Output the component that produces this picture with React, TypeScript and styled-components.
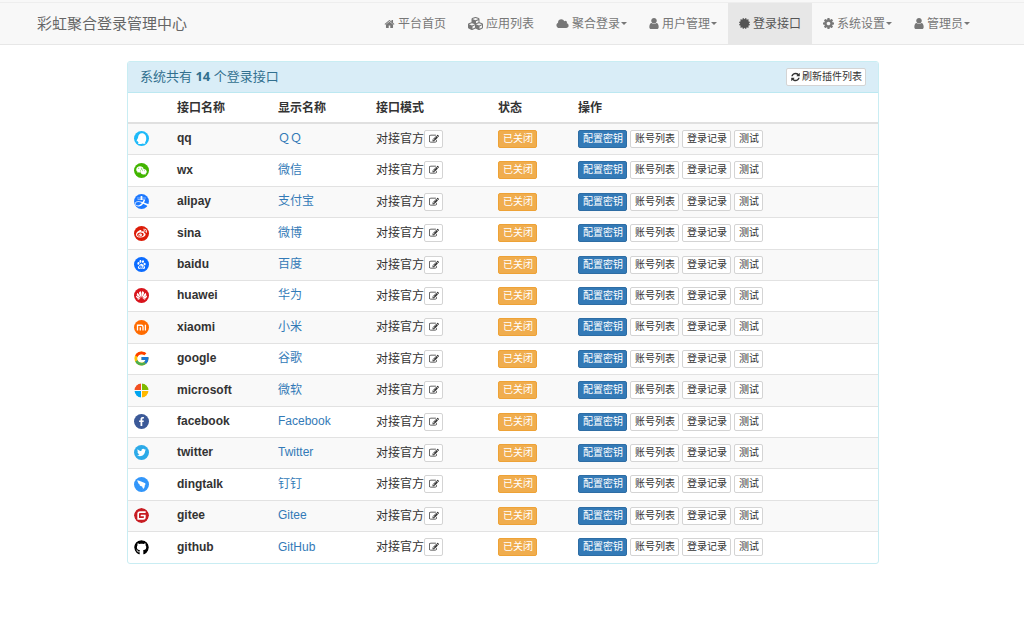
import React from "react";
import styled, { createGlobalStyle, css } from "styled-components";
import {
  FaAlipay,
  FaCertificate,
  FaCubes,
  FaFacebookF,
  FaGithub,
  FaTwitter,
  FaWeibo,
  FaWeixin,
} from "react-icons/fa";
import { FcGoogle } from "react-icons/fc";
import { SiBaidu, SiGitee, SiHuawei } from "react-icons/si";

const GlobalStyle = createGlobalStyle`
  *, *::before, *::after { box-sizing: border-box; }
  body {
    margin: 0;
    background: #fff;
    color: #333;
    font-family: "Liberation Sans", "Noto Sans CJK SC", sans-serif;
    font-size: 12px;
    line-height: 16px;
  }
  button { font-family: inherit; cursor: pointer; }
  a { text-decoration: none; }
`;

const glyphs = {
  home: "M1472 992v480q0 26-19 45t-45 19h-384v-384h-256v384h-384q-26 0-45-19t-19-45v-480q0-1 .5-3t.5-3l575-474 575 474q1 2 1 6zm223-69l-62 74q-8 9-21 11h-3q-13 0-21-7l-692-577-692 577q-12 8-24 7-13-2-21-11l-62-74q-8-10-7-23.5t11-21.5l719-599q32-26 76-26t76 26l244 204v-195q0-14 9-23t23-9h192q14 0 23 9t9 23v408l219 182q10 8 11 21.5t-7 23.5z",
  cloud: "M1984 1152q0 159-112.5 271.5t-271.5 112.5h-1088q-185 0-316.5-131.5t-131.5-316.5q0-132 71-241.5t187-163.5q-2-28-2-43 0-212 150-362t362-150q158 0 286.5 88t187.5 230q70-62 166-62 106 0 181 75t75 181q0 75-41 138 129 30 213 134.5t84 239.5z",
  user: "M1536 1399q0 109-62.5 187t-150.5 78h-854q-88 0-150.5-78t-62.5-187q0-85 8.5-160.5t31.5-152 58.5-131 94-89 134.5-34.5q131 128 313 128t313-128q76 0 134.5 34.5t94 89 58.5 131 31.5 152 8.5 160.5zm-256-887q0 159-112.5 271.5t-271.5 112.5-271.5-112.5-112.5-271.5 112.5-271.5 271.5-112.5 271.5 112.5 112.5 271.5z",
  cog: "M1152 896q0-106-75-181t-181-75-181 75-75 181 75 181 181 75 181-75 75-181zm512-109v222q0 12-8 23t-20 13l-185 28q-19 54-39 91 35 50 107 138 10 12 10 25t-9 23q-27 37-99 108t-94 71q-12 0-26-9l-138-108q-44 23-91 38-16 136-29 186-7 28-36 28h-222q-14 0-24.5-8.5t-11.5-21.5l-28-184q-49-16-90-37l-141 107q-10 9-25 9-14 0-25-11-126-114-165-168-7-10-7-23 0-12 8-23 15-21 51-66.5t54-70.5q-27-50-41-99l-183-27q-13-2-21-12.5t-8-23.5v-222q0-12 8-23t19-13l186-28q14-46 39-92-40-57-107-138-10-12-10-24 0-10 9-23 26-36 98.5-107.5t94.5-71.5q13 0 26 10l138 107q44-23 91-38 16-136 29-186 7-28 36-28h222q14 0 24.5 8.5t11.5 21.5l28 184q49 16 90 37l142-107q9-9 24-9 13 0 25 10 129 119 165 170 7 8 7 22 0 12-8 23-15 21-51 66.5t-54 70.5q26 50 41 98l183 28q13 2 21 12.5t8 23.5z",
  refresh: "M1639 1056q0 5-1 7-64 268-268 434.5t-478 166.5q-146 0-282.5-55t-243.5-157l-129 129q-19 19-45 19t-45-19-19-45v-448q0-26 19-45t45-19h448q26 0 45 19t19 45-19 45l-137 137q71 66 161 102t187 36q134 0 250-65t186-179q11-17 53-117 8-23 30-23h192q13 0 22.5 9.5t9.5 22.5zm25-800v448q0 26-19 45t-45 19h-448q-26 0-45-19t-19-45 19-45l138-138q-148-137-349-137-134 0-250 65t-186 179q-11 17-53 117-8 23-30 23h-199q-13 0-22.5-9.5t-9.5-22.5v-7q65-268 270-434.5t480-166.5q146 0 284 55.5t245 156.5l130-129q19-19 45-19t45 19 19 45z",
  edit: "M888 1184l116-116-152-152-116 116v56h96v96h56zm440-720q-16-16-33 1l-350 350q-17 17-1 33t33-1l350-350q17-17 1-33zm80 594v190q0 119-84.5 203.5t-203.5 84.5h-832q-119 0-203.5-84.5t-84.5-203.5v-832q0-119 84.5-203.5t203.5-84.5h832q63 0 117 25 15 7 18 23 3 17-9 29l-49 49q-14 14-32 8-23-6-45-6h-832q-66 0-113 47t-47 113v832q0 66 47 113t113 47h832q66 0 113-47t47-113v-126q0-13 9-22l64-64q15-15 35-7t20 29zm-96-738l288 288-672 672h-288v-288zm444 132l-92 92-288-288 92-92q28-28 68-28t68 28l152 152q28 28 28 68t-28 68z",
};

function Glyph({ name, box = "0 0 1792 1792", w = 12, h = 12 }: { name: keyof typeof glyphs; box?: string; w?: number; h?: number }) {
  return (
    <svg viewBox={box} width={w} height={h} fill="currentColor" aria-hidden="true">
      <path d={glyphs[name]} />
    </svg>
  );
}

/* ---------- navigation bar ---------- */

const TopBar = styled.header`
  padding: 2px 0 0;
  background: #f8f8f8;
`;

const NavFrame = styled.nav`
  padding-right: 18px;
  border-top: 1px solid #eee;
  border-bottom: 1px solid #e7e7e7;
`;

const NavInner = styled.div`
  display: flex;
  justify-content: space-between;
  max-width: 956px;
  min-height: 41px;
  margin: 0 auto;
`;

const Brand = styled.a`
  display: flex;
  align-items: center;
  padding-left: 12px;
  color: #666;
  font-size: 15px;
  white-space: nowrap;
`;

const NavList = styled.ul`
  display: flex;
  margin: 0;
  padding: 0;
  list-style: none;
`;

const NavLink = styled.a<{ $active?: boolean }>`
  display: flex;
  align-items: center;
  height: 100%;
  padding: 0 11px;
  color: ${(p) => (p.$active ? "#555" : "#777")};
  background: ${(p) => (p.$active ? "#e7e7e7" : "transparent")};
  white-space: nowrap;

  svg { flex: none; margin-right: 3px; }
`;

const Caret = styled.span`
  margin-left: 1px;
  border-top: 3px solid currentColor;
  border-left: 3px solid transparent;
  border-right: 3px solid transparent;
`;

/* ---------- panel ---------- */

const Main = styled.main`
  padding: 16px 18px 16px 0;
`;

const Panel = styled.section`
  max-width: 752px;
  margin: 0 auto;
  border: 1px solid #c9edf3;
  border-radius: 3px;
  overflow: hidden;
`;

const PanelHead = styled.div`
  display: flex;
  align-items: center;
  justify-content: space-between;
  min-height: 31px;
  padding: 0 12px;
  color: #31708f;
  background: #d9edf7;
  border-bottom: 1px solid #bce8f1;
`;

const PanelTitle = styled.h1`
  margin: 0;
  padding-bottom: 2px;
  font-family: "Noto Sans", "Noto Sans CJK SC", sans-serif;
  font-size: 13px;
  font-weight: 400;
  line-height: 18px;
`;

const tones = {
  plain: css`color: #333; background: #fff; border-color: #d4d4d4;`,
  primary: css`color: #fff; background: #337ab7; border-color: #2e6da4;`,
  warning: css`color: #fff; background: #f0ad4e; border-color: #eea236;`,
};

const SmallButton = styled.button<{ $tone?: keyof typeof tones }>`
  display: inline-flex;
  align-items: center;
  gap: 2px;
  height: 18px;
  padding: 0 3px 0 4px;
  border: 1px solid;
  border-radius: 2px;
  font-size: 10px;
  line-height: 14px;
  white-space: nowrap;
  ${(p) => tones[p.$tone ?? "plain"]}
`;

const Table = styled.table`
  width: 100%;
  border-collapse: separate;
  border-spacing: 0;
  table-layout: fixed;
`;

const HeadCell = styled.th<{ $width?: number }>`
  width: ${(p) => (p.$width ? `${p.$width}px` : "auto")};
  height: 31px;
  padding: 0 6px;
  border-bottom: 2px solid #e0e0e0;
  text-align: left;
`;

const Cell = styled.td`
  height: 31px;
  padding: 0 6px 2px;
  border-top: 1px solid #e2e2e2;
  vertical-align: middle;
`;

const Row = styled.tr`
  &:nth-child(odd) { background: #f9f9f9; }
  &:nth-child(5n + 2) ${Cell}, &:nth-child(5n + 4) ${Cell} { height: 32px; }
  &:first-child ${Cell} { height: 30px; border-top: 0; }
`;

const Name = styled.strong`
  display: block;
`;

const DisplayLink = styled.a`
  display: block;
  color: #337ab7;
`;

const Inline = styled.div<{ $gap?: number }>`
  display: flex;
  align-items: center;
  gap: ${(p) => p.$gap ?? 0}px;
  padding-top: 1px;
  white-space: nowrap;
`;

const Badge = styled.span<{ $bg: string; $fg: string }>`
  display: flex;
  align-items: center;
  justify-content: center;
  width: 15px;
  height: 15px;
  margin-top: 1px;
  border-radius: 50%;
  overflow: hidden;
  background: ${(p) => p.$bg};
  color: ${(p) => p.$fg};

  svg { flex: none; }
`;

const Penguin = () => (
  <svg viewBox="0 0 30 30" width="15" height="15">
    <path
      fill="#fff"
      d="M16 4.500c-4.800 0-7.500 3.500-7.800 8-.2 2.500-2.700 4.600-2.900 7.500 0 1.500 1.200 1 2.200 0 .4 1.500 1 2.300 2 3.200-1.500.7-2 1.600-1 2.300 2 1 6.500.5 8.500-.5 2 .8 4.500.8 5.700-.2.700-.8 0-1.500-.9-2 1.800-1.800 2.700-4.300 2.700-7.300C24.500 9 21.500 4.500 16 4.500z"
    />
  </svg>
);

const MiMark = () => (
  <svg viewBox="0 0 30 30" width="15" height="15" fill="none" stroke="#fff" strokeWidth="2.600">
    <path d="M7 21v-10.500h7.500q3.500 0 3.500 3.500v7M12.600 14.500v6.500M22.800 9.300v11.700" />
  </svg>
);

const Windows = () => (
  <svg viewBox="0 0 30 30" width="15" height="15">
    <path fill="#f25022" d="M14 14H1A14 14 0 0 1 14 1z" />
    <path fill="#7fba00" d="M16 14V1a14 14 0 0 1 13 13z" />
    <path fill="#00a4ef" d="M14 16v13A14 14 0 0 1 1 16z" />
    <path fill="#ffb900" d="M16 16h13a14 14 0 0 1-13 13z" />
  </svg>
);

const Wing = () => (
  <svg viewBox="0 0 30 30" width="15" height="15">
    <path fill="#fff" d="M6.500 6.500c5 1.500 10.500 3 15 5.500 1.500.8 1.800 1.800 1 3.300l-2 3.500h1.800L17.500 25l.7-4h-2.400l.9-2c-3-.4-4.700-1.400-5.900-3.400l1.500.2c-2.500-1.400-4-3-4.400-5.100C7 9.500 6.500 8 6.500 6.500z" />
  </svg>
);

const providers = [
  { id: "qq", label: "ＱＱ", bg: "#1ebaf9", fg: "#fff", icon: <Penguin /> },
  { id: "wx", label: "微信", bg: "#42b500", fg: "#fff", icon: <FaWeixin size={11} /> },
  { id: "alipay", label: "支付宝", bg: "#fff", fg: "#1c78ff", icon: <FaAlipay size={17} /> },
  { id: "sina", label: "微博", bg: "#dc1c08", fg: "#fff", icon: <FaWeibo size={11} /> },
  { id: "baidu", label: "百度", bg: "#0c6cff", fg: "#fff", icon: <SiBaidu size={9} /> },
  { id: "huawei", label: "华为", bg: "#d8141c", fg: "#fff", icon: <SiHuawei size={11} /> },
  { id: "xiaomi", label: "小米", bg: "#ff6b00", fg: "#fff", icon: <MiMark /> },
  { id: "google", label: "谷歌", bg: "transparent", fg: "#fff", icon: <FcGoogle size={17} /> },
  { id: "microsoft", label: "微软", bg: "transparent", fg: "#fff", icon: <Windows /> },
  { id: "facebook", label: "Facebook", bg: "#3b5998", fg: "#fff", icon: <FaFacebookF size={9} /> },
  { id: "twitter", label: "Twitter", bg: "#2caae8", fg: "#fff", icon: <FaTwitter size={9} /> },
  { id: "dingtalk", label: "钉钉", bg: "#3296fa", fg: "#fff", icon: <Wing /> },
  { id: "gitee", label: "Gitee", bg: "#fff", fg: "#c71d23", icon: <SiGitee size={15} /> },
  { id: "github", label: "GitHub", bg: "#fff", fg: "#000", icon: <FaGithub size={15} /> },
];

const userIcon = <Glyph name="user" box="256 0 1280 1792" w={10} h={13} />;

const navItems = [
  { label: "平台首页", icon: <Glyph name="home" w={11} /> },
  { label: "应用列表", icon: <FaCubes size={15} /> },
  { label: "聚合登录", icon: <Glyph name="cloud" box="0 0 2048 1792" w={13} />, menu: true },
  { label: "用户管理", icon: userIcon, menu: true },
  { label: "登录接口", icon: <FaCertificate size={11} />, active: true },
  { label: "系统设置", icon: <Glyph name="cog" box="128 0 1536 1792" w={11} h={13} />, menu: true },
  { label: "管理员", icon: userIcon, menu: true },
];

export default function App() {
  return (
    <>
      <GlobalStyle />
      <TopBar>
        <NavFrame>
          <NavInner>
            <Brand href="#">彩虹聚合登录管理中心</Brand>
            <NavList>
              {navItems.map((item) => (
                <li key={item.label}>
                  <NavLink href="#" $active={item.active}>
                    {item.icon}
                    {item.label}
                    {item.menu && <Caret />}
                  </NavLink>
                </li>
              ))}
            </NavList>
          </NavInner>
        </NavFrame>
      </TopBar>
      <Main>
        <Panel>
          <PanelHead>
            <PanelTitle>
              系统共有 <b>14</b> 个登录接口
            </PanelTitle>
            <SmallButton type="button">
              <Glyph name="refresh" box="128 0 1536 1792" w={9} h={10} />
              刷新插件列表
            </SmallButton>
          </PanelHead>
          <Table>
            <thead>
              <tr>
                <HeadCell $width={43} aria-label="图标" />
                <HeadCell $width={101}>接口名称</HeadCell>
                <HeadCell $width={98}>显示名称</HeadCell>
                <HeadCell $width={122}>接口模式</HeadCell>
                <HeadCell $width={80}>状态</HeadCell>
                <HeadCell>操作</HeadCell>
              </tr>
            </thead>
            <tbody>
              {providers.map((p) => (
                <Row key={p.id}>
                  <Cell>
                    <Badge $bg={p.bg} $fg={p.fg}>{p.icon}</Badge>
                  </Cell>
                  <Cell><Name>{p.id}</Name></Cell>
                  <Cell><DisplayLink href="#">{p.label}</DisplayLink></Cell>
                  <Cell>
                    <Inline>
                      对接官方
                      <SmallButton type="button" aria-label="编辑">
                        <Glyph name="edit" w={10} h={10} />
                      </SmallButton>
                    </Inline>
                  </Cell>
                  <Cell>
                    <Inline>
                      <SmallButton type="button" $tone="warning">已关闭</SmallButton>
                    </Inline>
                  </Cell>
                  <Cell>
                    <Inline $gap={3}>
                      <SmallButton type="button" $tone="primary">配置密钥</SmallButton>
                      <SmallButton type="button">账号列表</SmallButton>
                      <SmallButton type="button">登录记录</SmallButton>
                      <SmallButton type="button">测试</SmallButton>
                    </Inline>
                  </Cell>
                </Row>
              ))}
            </tbody>
          </Table>
        </Panel>
      </Main>
    </>
  );
}
